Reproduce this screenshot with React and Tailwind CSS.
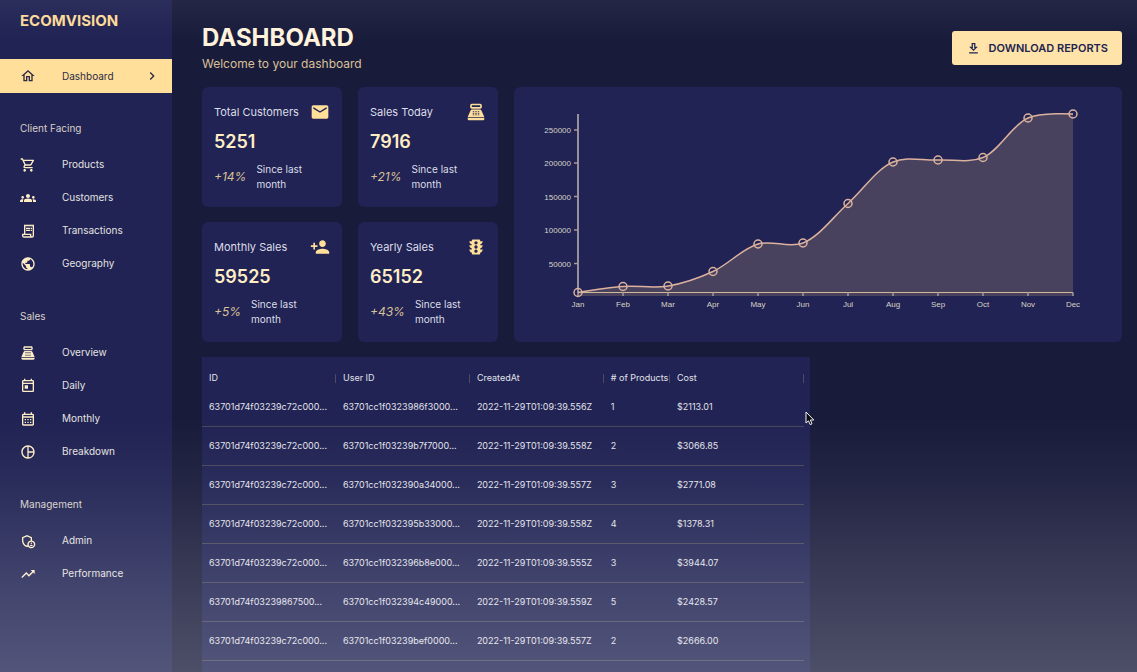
import {
  MdOutlineHome, MdChevronRight, MdOutlineShoppingCart, MdGroups, MdOutlineReceiptLong, MdPublic,
  MdPointOfSale, MdOutlineToday, MdOutlineCalendarMonth, MdOutlinePieChart,
  MdOutlineAdminPanelSettings, MdTrendingUp, MdOutlineDownload, MdEmail, MdPersonAdd, MdTraffic,
} from "react-icons/md";

const sections = [
  {
    title: "Client Facing",
    items: [
      ["Products", MdOutlineShoppingCart],
      ["Customers", MdGroups],
      ["Transactions", MdOutlineReceiptLong],
      ["Geography", MdPublic],
    ],
  },
  {
    title: "Sales",
    items: [
      ["Overview", MdPointOfSale],
      ["Daily", MdOutlineToday],
      ["Monthly", MdOutlineCalendarMonth],
      ["Breakdown", MdOutlinePieChart],
    ],
  },
  {
    title: "Management",
    items: [
      ["Admin", MdOutlineAdminPanelSettings],
      ["Performance", MdTrendingUp],
    ],
  },
];

const stats = [
  { title: "Total Customers", value: "5251", change: "+14%", Icon: MdEmail },
  { title: "Sales Today", value: "7916", change: "+21%", Icon: MdPointOfSale },
  { title: "Monthly Sales", value: "59525", change: "+5%", Icon: MdPersonAdd },
  { title: "Yearly Sales", value: "65152", change: "+43%", Icon: MdTraffic },
];

const columns = [
  ["ID", "w-[22.25%]"],
  ["User ID", "w-[22.25%]"],
  ["CreatedAt", "w-[22.25%]"],
  ["# of Products", "w-[11%]"],
  ["Cost", "w-[22.25%]"],
];

const rows = [
  ["63701d74f03239c72c000...", "63701cc1f0323986f3000...", "2022-11-29T01:09:39.556Z", "1", "$2113.01"],
  ["63701d74f03239c72c000...", "63701cc1f03239b7f7000...", "2022-11-29T01:09:39.558Z", "2", "$3066.85"],
  ["63701d74f03239c72c000...", "63701cc1f032390a34000...", "2022-11-29T01:09:39.557Z", "3", "$2771.08"],
  ["63701d74f03239c72c000...", "63701cc1f032395b33000...", "2022-11-29T01:09:39.558Z", "4", "$1378.31"],
  ["63701d74f03239c72c000...", "63701cc1f032396b8e000...", "2022-11-29T01:09:39.555Z", "3", "$3944.07"],
  ["63701d74f03239867500...", "63701cc1f032394c49000...", "2022-11-29T01:09:39.559Z", "5", "$2428.57"],
  ["63701d74f03239c72c000...", "63701cc1f03239bef0000...", "2022-11-29T01:09:39.557Z", "2", "$2666.00"],
];

const months = ["Jan", "Feb", "Mar", "Apr", "May", "Jun", "Jul", "Aug", "Sep", "Oct", "Nov", "Dec"];
const heights = [205.5, 199.5, 199, 184.5, 157, 156, 116.5, 75, 73, 70.5, 31, 27];
const points = heights.map((y, i) => [64 + 45 * i, y]);
const ticks = [["250000", 43], ["200000", 76], ["150000", 109.5], ["100000", 143], ["50000", 176.5]];

// Centripetal Catmull-Rom spline written as cubic Bezier segments.
function spline(p) {
  const dist = (a, b) => Math.hypot(a[0] - b[0], a[1] - b[1]);
  let d = `M${p[0][0]},${p[0][1]}`;
  for (let i = 0; i < p.length - 1; i++) {
    const p0 = p[i - 1] || p[i];
    const p1 = p[i];
    const p2 = p[i + 1];
    const p3 = p[i + 2] || p2;
    const a = dist(p0, p1), b = dist(p1, p2), c = dist(p2, p3);
    const sa = Math.sqrt(a), sb = Math.sqrt(b), sc = Math.sqrt(c);
    const c1 = [0, 1].map((k) =>
      a ? (p1[k] * (2 * a + 3 * sa * sb + b) - p0[k] * b + p2[k] * a) / (3 * sa * (sa + sb)) : p1[k]);
    const c2 = [0, 1].map((k) =>
      c ? (p2[k] * (2 * c + 3 * sc * sb + b) + p1[k] * c - p3[k] * b) / (3 * sc * (sc + sb)) : p2[k]);
    d += `C${c1[0]},${c1[1]},${c2[0]},${c2[1]},${p2[0]},${p2[1]}`;
  }
  return d;
}

function Sidebar() {
  return (
    <aside className="w-[172px] shrink-0 bg-[#202353] text-[10px] text-[#e4e2e0]">
      <div className="flex h-[59px] items-start px-5 pt-[11px] text-[15px] leading-5 font-bold text-[#fcd998]">
        ECOMVISION
      </div>
      <nav>
        <a href="#" className="flex h-[34px] items-center bg-[#ffdf99] pr-3 pl-5 text-[#2b2b48]">
          <MdOutlineHome className="size-4" />
          <span className="ml-[26px] flex-1">Dashboard</span>
          <MdChevronRight className="size-4" />
        </a>
        <div className="mt-[25px] flex flex-col gap-[26px]">
          {sections.map((s) => (
            <section key={s.title}>
              <h2 className="mb-[10px] px-5 leading-5 text-[#d8d1c8]">{s.title}</h2>
              {s.items.map(([label, Icon]) => (
                <a key={label} href="#" className="flex h-[33px] items-center gap-[26px] px-5">
                  <Icon className="size-4 text-[#ffedc6]" />
                  {label}
                </a>
              ))}
            </section>
          ))}
        </div>
      </nav>
    </aside>
  );
}

function StatCard({ title, value, change, Icon }) {
  return (
    <article className="col-span-2 flex flex-col rounded-md bg-[#202353] px-3 pt-[14px] text-[#dddde8]">
      <div className="flex h-[22px] items-center justify-between">
        <h3 className="text-[11px]">{title}</h3>
        <Icon className="size-5 text-[#ffdf99]" />
      </div>
      <p className="mt-[7px] text-[18px] leading-6 font-semibold text-[#ffedc6]">{value}</p>
      <div className="mt-2 flex items-center gap-[10px] pr-6">
        <span className="text-[12px] text-[#d9c197] italic">{change}</span>
        <span className="text-[10px] leading-[15px]">Since last month</span>
      </div>
    </article>
  );
}

function Chart() {
  const line = spline(points);
  return (
    <section className="col-span-8 row-span-2 rounded-md bg-[#202353]">
      <svg viewBox="0 0 608 255" className="size-full" role="img" aria-label="Sales by month">
        <path d={`${line}V209H64Z`} fill="#48425f" />
        <g stroke="#a39a98" strokeWidth="1.5">
          <path d="M64 27V206" strokeWidth="2" stroke="#96909a" />
          {ticks.map(([label, y]) => <path key={label} d={`M60 ${y}H64`} />)}
          <path d="M64 205.5H559" strokeWidth="1" stroke="#d0b999" />
          {points.map(([x]) => <path key={x} d={`M${x} 205.5V209`} />)}
        </g>
        <g fill="#d8d2c8" fontFamily="'Liberation Sans', Arial, sans-serif" fontSize="8">
          {ticks.map(([label, y]) => <text key={label} x="57" y={y + 3} textAnchor="end">{label}</text>)}
          {months.map((m, i) => <text key={m} x={64 + 45 * i} y="220" textAnchor="middle">{m}</text>)}
        </g>
        <path d={line} fill="none" stroke="#dcb29e" strokeWidth="1.5" />
        {points.map(([x, y]) => (
          <circle key={x} cx={x} cy={y} r="4" fill="none" stroke="#dcb29e" strokeWidth="1.5" />
        ))}
      </svg>
    </section>
  );
}

function Transactions() {
  return (
    <section className="col-span-8 bg-[#202353] pr-[6px]">
      <table className="w-full table-fixed border-collapse text-left text-[9px] text-[#e2e2ea]">
        <thead>
          <tr className="h-[30px]">
            {columns.map(([name, width]) => (
              <th key={name} className={`${width} p-0 pt-3 font-normal`}>
                <div className="flex h-[18px] items-center justify-between pl-[7px] whitespace-nowrap">
                  {name}
                  <span className="h-[9px] w-px bg-[#4b4c61]" />
                </div>
              </th>
            ))}
          </tr>
        </thead>
        <tbody>
          {rows.map((r, i) => (
            <tr key={i} className="h-[39px] border-b border-[#47475c]">
              {r.map((cell, j) => (
                <td key={j} className="overflow-hidden p-0 pl-[7px] whitespace-nowrap">{cell}</td>
              ))}
            </tr>
          ))}
        </tbody>
      </table>
    </section>
  );
}

export default function App() {
  return (
    <div className="relative flex h-screen overflow-hidden bg-[#191b3b] font-['Inter',sans-serif]">
      <Sidebar />
      <main className="flex min-w-0 flex-1 flex-col pr-[15px] pl-[30px]">
        <header className="flex h-[87px] shrink-0 items-start justify-between">
          <div className="pt-[23px]">
            <h1 className="text-[24px] leading-[30px] font-bold text-[#fff3de]">DASHBOARD</h1>
            <p className="text-[12px] leading-[22px] text-[#d9c197]">Welcome to your dashboard</p>
          </div>
          <button className="mt-[31px] flex h-[34px] items-center gap-2 rounded-[3px] bg-[#ffe3a8] px-[14px] text-[11px] font-semibold text-[#21244f]">
            <MdOutlineDownload className="size-[15px]" />
            DOWNLOAD REPORTS
          </button>
        </header>
        <div className="grid flex-1 grid-cols-12 grid-rows-[120px_120px_1fr] gap-x-4 gap-y-[15px]">
          <StatCard {...stats[0]} />
          <StatCard {...stats[1]} />
          <Chart />
          <StatCard {...stats[2]} />
          <StatCard {...stats[3]} />
          <Transactions />
        </div>
      </main>
      <div className="pointer-events-none absolute inset-0 bg-[linear-gradient(to_bottom,#ffffff0d_0,#ffffff00_6%,#ffffff00_62%,#ffffff0c_72%,#ffffff26_87%,#ffffff3a_100%)]" />
      <svg viewBox="0 0 10 15" className="pointer-events-none absolute top-[411px] left-[805px] h-[15px] w-[10px]" aria-hidden="true">
        <path d="M1 1V12L3.5 9.8L5.2 13.6L7 12.8L5.4 9H8.8Z" fill="#0b0b12" stroke="#f2f2f5" strokeWidth="1" strokeLinejoin="round" />
      </svg>
    </div>
  );
}
